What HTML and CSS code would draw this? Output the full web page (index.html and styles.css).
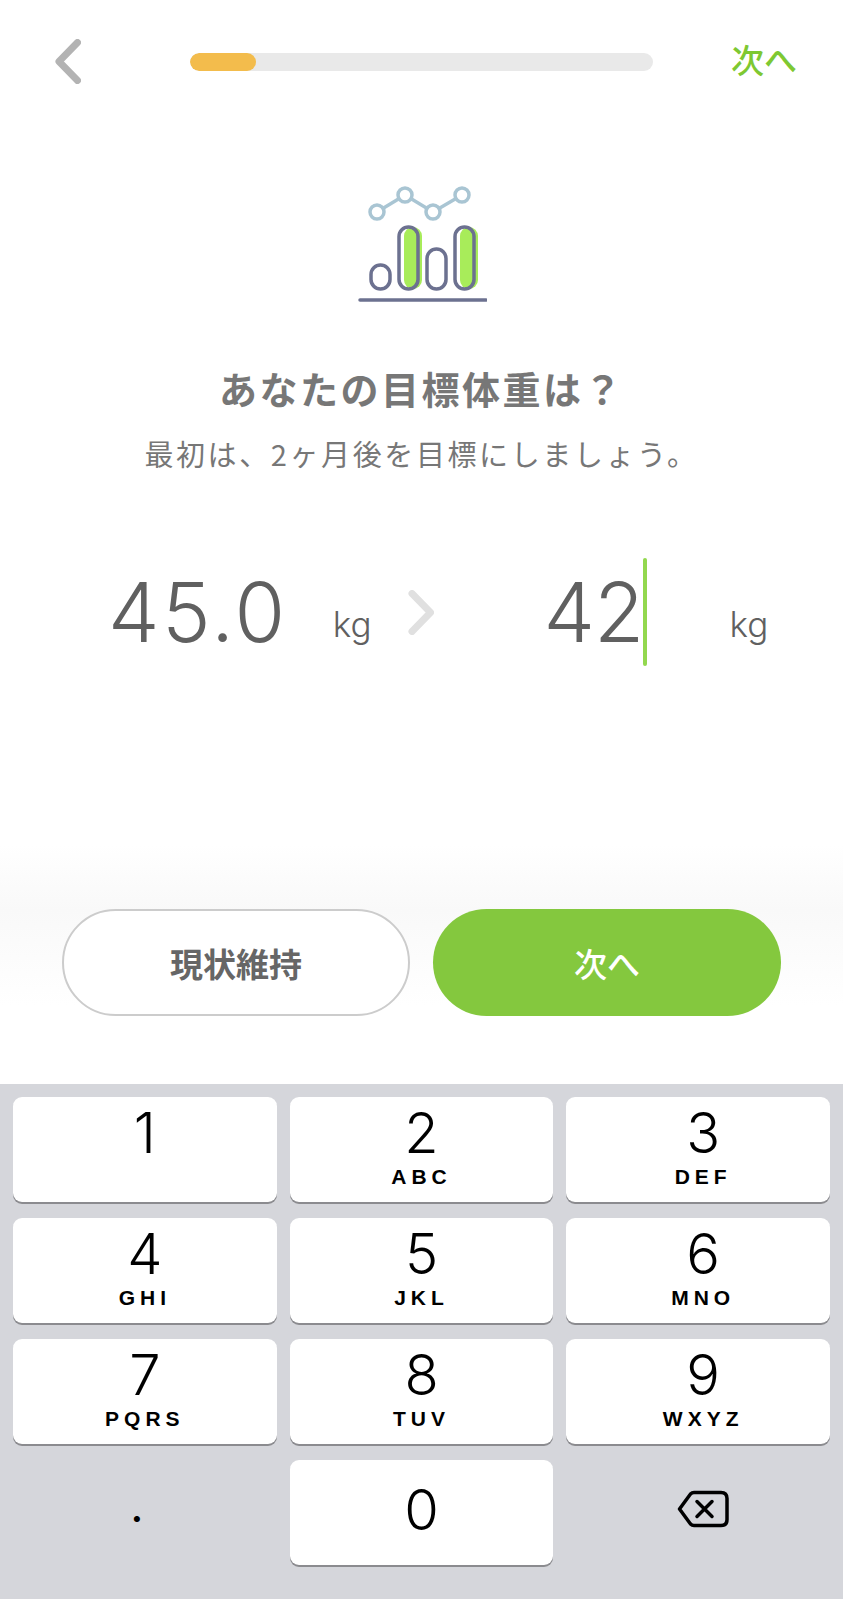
FILE: index.html
```html
<!DOCTYPE html>
<html lang="ja">
<head>
    <meta charset="UTF-8">
    <meta name="viewport" content="width=device-width, initial-scale=1.0">
    <title>目標体重</title>
    <link rel="stylesheet" href="styles.css">
</head>
<body>
    <div class="page">
        <div class="topbar">
            <svg class="back" width="26" height="45" viewBox="0 0 26 45">
                <path d="M22.500 3.500 L4 22.500 L22.500 41.500" fill="none" stroke="#b3b3b3" stroke-width="7" stroke-linecap="round" stroke-linejoin="round"/>
            </svg>
            <div class="progress"><div class="progress-fill"></div></div>
            <div class="next-link">次へ</div>
        </div>

        <svg class="chart" width="130" height="130" viewBox="0 0 130 130">
            <polyline points="20,37 48,20 76,37 105,20" fill="none" stroke="#a9c5d3" stroke-width="3.500"/>
            <circle cx="20" cy="37" r="7" fill="#fff" stroke="#a9c5d3" stroke-width="3.500"/>
            <circle cx="48" cy="20" r="7" fill="#fff" stroke="#a9c5d3" stroke-width="3.500"/>
            <circle cx="76" cy="37" r="7" fill="#fff" stroke="#a9c5d3" stroke-width="3.500"/>
            <circle cx="105" cy="20" r="7" fill="#fff" stroke="#a9c5d3" stroke-width="3.500"/>
            <rect x="47" y="52" width="18" height="62" rx="9" fill="#a8ec5a"/>
            <rect x="103" y="52" width="18" height="62" rx="9" fill="#a8ec5a"/>
            <rect x="14" y="90" width="19" height="24" rx="9.500" fill="none" stroke="#6c7190" stroke-width="3.500"/>
            <rect x="42" y="52" width="19" height="62" rx="9.500" fill="none" stroke="#6c7190" stroke-width="3.500"/>
            <rect x="70" y="74" width="19" height="40" rx="9.500" fill="none" stroke="#6c7190" stroke-width="3.500"/>
            <rect x="98" y="52" width="19" height="62" rx="9.500" fill="none" stroke="#6c7190" stroke-width="3.500"/>
            <line x1="3" y1="125" x2="129" y2="125" stroke="#6c7190" stroke-width="3.500" stroke-linecap="round"/>
        </svg>

        <h1 class="title">あなたの目標体重は？</h1>
        <p class="subtitle">最初は、2ヶ月後を目標にしましょう。</p>

        <div class="weights">
            <span class="number current">45.0</span>
            <span class="unit unit-current">kg</span>
            <svg class="arrow" width="26" height="45" viewBox="0 0 26 45">
                <path d="M4 3.500 L22.500 22.500 L4 41.500" fill="none" stroke="#e0e0e0" stroke-width="7" stroke-linecap="round" stroke-linejoin="round"/>
            </svg>
            <span class="number goal">42</span>
            <span class="caret"></span>
            <span class="unit unit-goal">kg</span>
        </div>

        <div class="actions">
            <button class="btn btn-keep">現状維持</button>
            <button class="btn btn-next">次へ</button>
        </div>

        <div class="keyboard">
            <div class="key"><span class="digit">1</span></div>
            <div class="key"><span class="digit">2</span><span class="letters">ABC</span></div>
            <div class="key"><span class="digit">3</span><span class="letters">DEF</span></div>
            <div class="key"><span class="digit">4</span><span class="letters">GHI</span></div>
            <div class="key"><span class="digit">5</span><span class="letters">JKL</span></div>
            <div class="key"><span class="digit">6</span><span class="letters">MNO</span></div>
            <div class="key"><span class="digit">7</span><span class="letters">PQRS</span></div>
            <div class="key"><span class="digit">8</span><span class="letters">TUV</span></div>
            <div class="key"><span class="digit">9</span><span class="letters">WXYZ</span></div>
            <div class="key key-plain"><span class="dot">.</span></div>
            <div class="key key-zero"><span class="digit">0</span></div>
            <div class="key key-plain">
                <svg class="backspace" width="52" height="38" viewBox="0 0 52 38">
                    <path d="M17 2.500 H44 Q50 2.500 50 8.500 V29.500 Q50 35.500 44 35.500 H17 Q15 35.500 13.500 34 L2.500 19 L13.500 4 Q15 2.500 17 2.500 Z" fill="none" stroke="#000" stroke-width="3.500" stroke-linejoin="round"/>
                    <path d="M20 11.500 L35 26.500 M35 11.500 L20 26.500" fill="none" stroke="#000" stroke-width="3.500" stroke-linecap="round"/>
                </svg>
            </div>
        </div>
    </div>
</body>
</html>
```

FILE: styles.css
```css
body {
    margin: 0;
    padding: 0;
    background-color: #fff;
    font-family: Inter, "Noto Sans CJK JP", sans-serif;
}

.page {
    width: 843px;
    height: 1599px;
    display: flex;
    flex-direction: column;
    overflow: hidden;
}

.topbar {
    height: 123px;
    display: flex;
    align-items: center;
    flex-shrink: 0;
}

.back {
    margin-left: 55px;
}

.progress {
    width: 463px;
    height: 18px;
    margin-left: 109px;
    background-color: #e9e9e9;
    border-radius: 9px;
    overflow: hidden;
}

.progress-fill {
    width: 66px;
    height: 100%;
    background-color: #f3bc4c;
    border-radius: 9px;
}

.next-link {
    margin: 0 0 6px 78px;
    font-family: "Noto Sans CJK JP", sans-serif;
    font-size: 33px;
    font-weight: 500;
    color: #7ec832;
}

.chart {
    display: block;
    flex-shrink: 0;
    margin: 52px 0 0 357px;
}

.title {
    margin: 60px 0 0;
    text-align: center;
    font-family: "Noto Sans CJK JP", sans-serif;
    font-size: 38px;
    font-weight: 700;
    letter-spacing: 2.500px;
    line-height: 46px;
    color: #777;
}

.subtitle {
    margin: 22px 0 0;
    text-align: center;
    font-family: "Noto Sans CJK JP", sans-serif;
    font-size: 29px;
    font-weight: 400;
    letter-spacing: 2.600px;
    line-height: 40px;
    color: #777;
}

.weights {
    height: 108px;
    margin-top: 85px;
    display: flex;
    align-items: center;
    flex-shrink: 0;
    color: #606060;
}

.number {
    font-size: 82px;
    font-weight: 350;
    line-height: 108px;
    padding-top: 2px;
}

.current {
    margin-left: 108px;
    letter-spacing: 2.500px;
}

.unit {
    font-size: 35px;
    font-weight: 300;
    margin-top: 24px;
}

.unit-current {
    margin-left: 45px;
}

.arrow {
    margin-left: 36px;
}

.goal {
    margin-left: 110px;
    letter-spacing: -1px;
}

.caret {
    width: 4px;
    height: 108px;
    margin-left: 0;
    background-color: #93d84f;
    border-radius: 2px;
}

.unit-goal {
    margin-left: 82px;
}

.actions {
    height: 418px;
    padding-top: 243px;
    box-sizing: border-box;
    display: flex;
    justify-content: center;
    gap: 23px;
    flex-shrink: 0;
    background: linear-gradient(#fff 179px, #f9f9f9 244px, #fff 340px);
}

.btn {
    width: 348px;
    height: 107px;
    border-radius: 54px;
    box-sizing: border-box;
    font-family: "Noto Sans CJK JP", sans-serif;
    font-size: 33px;
}

.btn-keep {
    background-color: #fff;
    border: 2px solid #cccccc;
    color: #666;
    font-weight: 700;
}

.btn-next {
    background-color: #84c83e;
    border: 0;
    color: #fff;
    font-weight: 500;
}

.keyboard {
    flex: 1;
    padding: 13px 13px 0;
    display: grid;
    grid-template-columns: repeat(3, 1fr);
    grid-auto-rows: 105px;
    column-gap: 13px;
    row-gap: 16px;
    background-color: #d5d6db;
}

.key {
    background-color: #fff;
    border-radius: 9px;
    box-shadow: 0 2px 0 #8b8b8f;
    display: flex;
    flex-direction: column;
    align-items: center;
    color: #000;
}

.key:nth-child(3n) {
    padding-left: 10px;
}

.key-plain {
    background: none;
    box-shadow: none;
    justify-content: center;
}

.key-zero {
    justify-content: center;
}

.digit {
    font-size: 56px;
    font-weight: 300;
    line-height: 50px;
    margin-top: 11px;
}

.key-zero .digit {
    margin: 0 0 5px;
}

.letters {
    font-family: "Liberation Sans", sans-serif;
    font-size: 21px;
    font-weight: 700;
    letter-spacing: 5px;
    line-height: 24px;
    margin-top: 7px;
}

.dot {
    font-size: 46px;
    line-height: 40px;
    margin: 0 16px 16px 0;
}

.backspace {
    margin-bottom: 8px;
}
```
